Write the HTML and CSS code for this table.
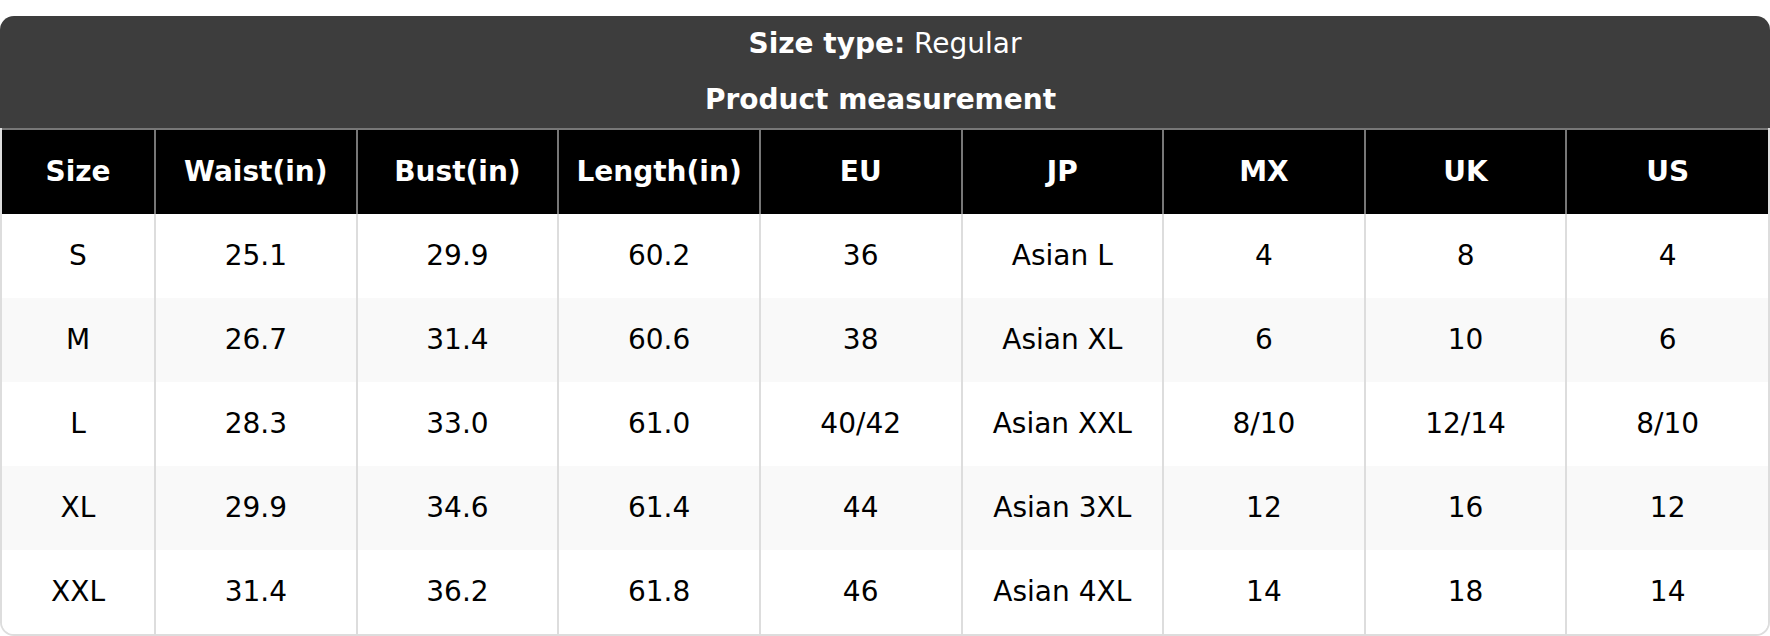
FILE: index.html
```html
<!DOCTYPE html>
<html>
<head>
<meta charset="utf-8">
<link rel="stylesheet" href="styles.css">
</head>
<body>
<div class="chart">
  <div class="title">
    <div class="line"><b>Size type:</b> Regular</div>
    <div class="line sub"><b>Product measurement</b></div>
  </div>
  <div class="frame">
    <table class="grid">
      <colgroup>
        <col class="c-size"><col><col><col><col><col><col><col><col>
      </colgroup>
      <thead>
        <tr><th>Size</th><th>Waist(in)</th><th>Bust(in)</th><th>Length(in)</th><th>EU</th><th>JP</th><th>MX</th><th>UK</th><th>US</th></tr>
      </thead>
      <tbody>
        <tr><td>S</td><td>25.1</td><td>29.9</td><td>60.2</td><td>36</td><td>Asian L</td><td>4</td><td>8</td><td>4</td></tr>
        <tr><td>M</td><td>26.7</td><td>31.4</td><td>60.6</td><td>38</td><td>Asian XL</td><td>6</td><td>10</td><td>6</td></tr>
        <tr><td>L</td><td>28.3</td><td>33.0</td><td>61.0</td><td>40/42</td><td>Asian XXL</td><td>8/10</td><td>12/14</td><td>8/10</td></tr>
        <tr><td>XL</td><td>29.9</td><td>34.6</td><td>61.4</td><td>44</td><td>Asian 3XL</td><td>12</td><td>16</td><td>12</td></tr>
        <tr><td>XXL</td><td>31.4</td><td>36.2</td><td>61.8</td><td>46</td><td>Asian 4XL</td><td>14</td><td>18</td><td>14</td></tr>
      </tbody>
    </table>
  </div>
</div>
</body>
</html>
```
FILE: styles.css
```css
html, body {
  margin: 0;
  padding: 0;
  background: #fff;
}
body {
  padding-top: 16px;
  font-family: "DejaVu Sans", Verdana, sans-serif;
  font-size: 28px;
  color: #000;
}
.chart {
  width: 1770px;
}
.title {
  background: #3d3d3d;
  color: #fff;
  text-align: center;
  height: 112px;
  border-radius: 14px 14px 0 0;
}
.title .line {
  height: 56px;
  line-height: 56px;
}
.title .sub {
  padding-right: 9px;
}
.title b { font-weight: bold; }
.frame {
  border: 2px solid #ddd;
  border-top: none;
  border-radius: 0 0 14px 14px;
  overflow: hidden;
}
.grid {
  width: 100%;
  border-collapse: collapse;
  table-layout: fixed;
}
.c-size { width: 153px; }
.grid th {
  background: #000;
  color: #fff;
  font-weight: bold;
  height: 82px;
  padding: 0 0 2px 0;
  border-top: 2px solid #777;
  border-left: 2px solid #777;
  text-align: center;
}
.grid th:first-child { border-left: none; }
.grid td {
  height: 82px;
  padding: 0 0 2px 0;
  text-align: center;
  border-left: 2px solid #ddd;
}
.grid td:first-child { border-left: none; }
.grid tbody tr:nth-child(even) td { background: #f9f9f9; }
.grid tbody tr:nth-child(odd) td { background: #fff; }
```
